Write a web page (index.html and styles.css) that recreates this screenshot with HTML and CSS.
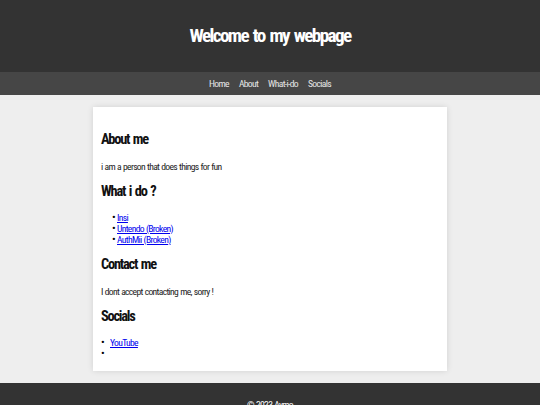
FILE: index.html
```html
<!DOCTYPE html>
<html lang="en">
<head>
    <meta charset="UTF-8">
    <meta name="viewport" content="width=device-width, initial-scale=1.0">
    <title>Aymo</title>
    <link rel="stylesheet" href="styles.css">
</head>
<body>
    <header>
        <h1>Welcome to my webpage</h1>
    </header>
    <nav>
        <a href="#">Home</a>
        <a href="#about">About</a>
        <a href="#what-i-do">What-i-do</a>
        <a href="#socials">Socials</a>
    </nav>
    <main class="container">
        <section id="about">
            <h2>About me</h2>
            <p>i am a person that does things for fun</p>
        </section>
        <section id="what-i-do">
            <h2>What i do ?</h2>
            <ul>
                <li><a href="#">Insi</a></li>
                <li><a href="#">Untendo (Broken)</a></li>
                <li><a href="#">AuthMii (Broken)</a></li>
            </ul>
        </section>
        <section id="contact">
            <h2>Contact me</h2>
            <p>I dont accept contacting me, sorry !</p>
        </section>
        <section id="socials">
            <h2>Socials</h2>
            <ul class="socials">
                <li><a href="#">YouTube</a></li>
                <li></li>
            </ul>
        </section>
    </main>
    <footer>
        <p>&copy; 2023 Aymo</p>
    </footer>
</body>
</html>
```

FILE: styles.css
```css
body {
    font-family: 'Roboto Condensed', 'Liberation Sans', Arial, sans-serif;
    font-size: 9.6px;
    line-height: 11px;
    letter-spacing: -0.07em;
    word-spacing: 0.5px;
    background-color: #eeeeee;
    color: #222;
    margin: 0;
    padding: 0;
}
header {
    background-color: #333;
    color: #fff;
    text-align: center;
    padding: 12px 0;
}
h1 {
    font-size: 19.2px;
    line-height: 22px;
    letter-spacing: -0.085em;
    word-spacing: 2px;
    margin: 13px 0;
}
nav {
    background-color: #464646;
    display: flex;
    justify-content: center;
    gap: 10px;
    padding: 6px 0;
}
nav a {
    color: #e6e6e6;
    text-decoration: none;
}
.container {
    background: #fff;
    width: 338px;
    margin: 12px auto 0;
    padding: 13px 8px 12px;
    box-shadow: 0 0 6px rgba(0, 0, 0, 0.12);
}
h2 {
    font-size: 14.4px;
    line-height: 16.5px;
    letter-spacing: -0.085em;
    word-spacing: 1.5px;
    margin: 12px 0;
    color: #111;
}
p {
    margin: 9.6px 0;
}
ul {
    list-style: none;
    margin: 9.6px 0;
    padding-left: 16px;
}
li::before {
    content: "\2022";
    display: inline-block;
    font-size: 11px;
    color: #000;
    width: 5px;
    margin-left: -5px;
}
a {
    color: #0000ee;
}
.socials {
    padding-left: 0;
    margin-bottom: 0;
}
.socials li::before {
    width: 9px;
    margin-left: 0;
}
footer {
    background-color: #333;
    color: #fff;
    text-align: center;
    margin-top: 12px;
    padding: 6px 0;
}
```
